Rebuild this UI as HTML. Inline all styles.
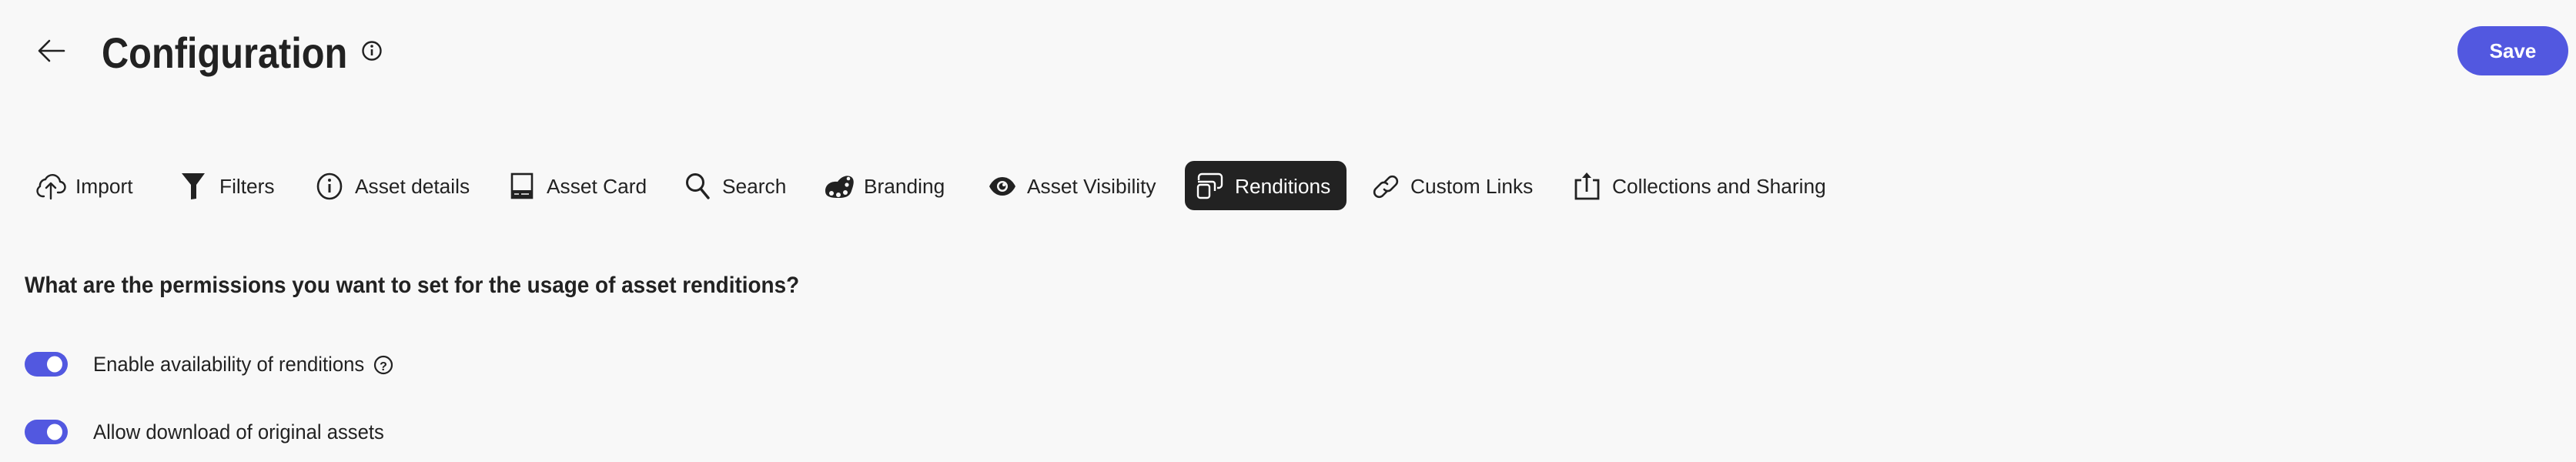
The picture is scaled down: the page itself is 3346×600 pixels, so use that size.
<!DOCTYPE html>
<html><head><meta charset="utf-8"><style>
html,body{margin:0;padding:0;background:#f8f8f8;}
body{width:3346px;height:600px;position:relative;overflow:hidden;font-family:"Liberation Sans",sans-serif;color:#222;}
.a{position:absolute;white-space:nowrap;}
.t{font-size:26.3px;line-height:28px;top:228px;color:#222;}
svg{position:absolute;overflow:visible;}
</style></head><body>

<svg style="left:0;top:0" width="1" height="1"><path d="M83 66H52M64 53L51 66L64 79" fill="none" stroke="#222" stroke-width="2.6" stroke-linecap="round" stroke-linejoin="round"/></svg>
<div class="a" style="left:132px;top:41px;font-size:56px;line-height:56px;font-weight:bold;transform:scaleX(0.87);transform-origin:left;">Configuration</div>
<svg style="left:0;top:0" width="1" height="1"><circle cx="483" cy="66" r="11.5" fill="none" stroke="#222" stroke-width="2.4"/><circle cx="483" cy="60" r="1.8" fill="#222"/><path d="M483 64v8" stroke="#222" stroke-width="2.6"/></svg>

<div class="a" style="left:3192px;top:34px;width:144px;height:64px;border-radius:32px;background:#5258e0;color:#fff;font-weight:bold;font-size:26px;display:flex;align-items:center;justify-content:center;">Save</div>

<svg style="left:0;top:0" width="1" height="1" fill="none" stroke="#222" stroke-width="2.4" stroke-linecap="round" stroke-linejoin="round">
<path d="M57 255H55a7 7 0 0 1-3-13a8 8 0 0 1 7-9a10 10 0 0 1 19 3a7 7 0 0 1-1 14h-2"/>
<path d="M66 258V238M60 244l6-6l6 6"/>
</svg>
<div class="a t" style="left:98px">Import</div>

<svg style="left:0;top:0" width="1" height="1"><path d="M236 225H266L255 240V258L248 259V240Z" fill="#222"/></svg>
<div class="a t" style="left:285px">Filters</div>

<svg style="left:0;top:0" width="1" height="1"><ellipse cx="428" cy="242" rx="15" ry="16" fill="none" stroke="#222" stroke-width="2.6"/><circle cx="428" cy="234" r="2" fill="#222"/><path d="M428 239v11" stroke="#222" stroke-width="3"/></svg>
<div class="a t" style="left:461px">Asset details</div>

<svg style="left:0;top:0" width="1" height="1"><rect x="665" y="226" width="26" height="31" fill="none" stroke="#222" stroke-width="2.6"/><rect x="665" y="247" width="26" height="10" fill="#222"/><path d="M668 252h6M677 252h10" stroke="#f8f8f8" stroke-width="1.5"/></svg>
<div class="a t" style="left:710px">Asset Card</div>

<svg style="left:0;top:0" width="1" height="1"><circle cx="903" cy="237" r="10.5" fill="none" stroke="#222" stroke-width="3"/><path d="M910 245l10 12" stroke="#222" stroke-width="3.4" stroke-linecap="round"/></svg>
<div class="a t" style="left:938px">Search</div>

<svg style="left:0;top:0" width="1" height="1"><path d="M1072 248c0-9 8-13 16-12c4-6 12-10 18-6c5 4 2 12 0 18c-2 6-6 9-17 9c-9 0-17-1-17-9z" fill="#222"/><circle cx="1080" cy="251" r="3" fill="#f8f8f8"/><circle cx="1089" cy="253" r="3" fill="#f8f8f8"/><circle cx="1098" cy="250" r="3" fill="#f8f8f8"/><circle cx="1100" cy="240" r="2.6" fill="#f8f8f8"/><circle cx="1102" cy="232" r="2.3" fill="#f8f8f8"/></svg>
<div class="a t" style="left:1122px">Branding</div>

<svg style="left:0;top:0" width="1" height="1"><path d="M1285 242c4-8 10-12 17-12s13 4 17 12c-4 8-10 12-17 12s-13-4-17-12z" fill="#222"/><circle cx="1302" cy="242" r="7" fill="#f8f8f8"/><circle cx="1302" cy="242" r="4.5" fill="#222"/><circle cx="1304" cy="240" r="2" fill="#f8f8f8"/></svg>
<div class="a t" style="left:1334px">Asset Visibility</div>

<div class="a" style="left:1539px;top:209px;width:210px;height:64px;border-radius:12px;background:#222;"></div>
<svg style="left:0;top:0" width="1" height="1" fill="none" stroke="#fff" stroke-width="2.4" stroke-linejoin="round"><path d="M1557 234v-4a4 4 0 0 1 4-4h22a4 4 0 0 1 4 4v10a4 4 0 0 1-4 4h-2"/><rect x="1556" y="240" width="15" height="17" rx="3"/><path d="M1556 236h19a3 3 0 0 1 3 3v9"/></svg>
<div class="a t" style="left:1604px;color:#fff">Renditions</div>

<svg style="left:0;top:0" width="1" height="1" fill="none" stroke="#222" stroke-width="2.6" stroke-linecap="round"><path d="M1799 236l5-5a6 6 0 0 1 9 9l-6 6a6 6 0 0 1-9 0"/><path d="M1801 249l-5 5a6 6 0 0 1-9-9l6-6a6 6 0 0 1 9 0"/></svg>
<div class="a t" style="left:1832px">Custom Links</div>

<svg style="left:0;top:0" width="1" height="1"><path d="M2054 234h-7v24h29v-24h-7" fill="none" stroke="#222" stroke-width="2.8"/><path d="M2061 249V228" stroke="#222" stroke-width="2.8"/><path d="M2055 231l6-7l6 7z" fill="#222"/></svg>
<div class="a t" style="left:2094px">Collections and Sharing</div>

<div class="a" style="left:32px;top:356px;font-size:30px;line-height:30px;font-weight:bold;transform:scaleX(0.93);transform-origin:left;">What are the permissions you want to set for the usage of asset renditions?</div>

<div class="a" style="left:32px;top:457px;width:56px;height:32px;border-radius:16px;background:#5258e0;"></div>
<div class="a" style="left:61px;top:466px;width:20px;height:14px;border-radius:50%;background:#fff;transform:scaleY(1.5)"></div>
<div class="a" style="left:121px;top:459px;font-size:27px;line-height:28px;transform:scaleX(0.95);transform-origin:left;">Enable availability of renditions</div>
<svg style="left:0;top:0" width="1" height="1"><circle cx="498" cy="474" r="11" fill="none" stroke="#222" stroke-width="2.2"/><text x="498" y="481" font-family="Liberation Sans" font-size="16" font-weight="bold" text-anchor="middle" fill="#222">?</text></svg>

<div class="a" style="left:32px;top:545px;width:56px;height:32px;border-radius:16px;background:#5258e0;"></div>
<div class="a" style="left:61px;top:554px;width:20px;height:14px;border-radius:50%;background:#fff;transform:scaleY(1.5)"></div>
<div class="a" style="left:121px;top:547px;font-size:27px;line-height:28px;transform:scaleX(0.95);transform-origin:left;">Allow download of original assets</div>

</body></html>
